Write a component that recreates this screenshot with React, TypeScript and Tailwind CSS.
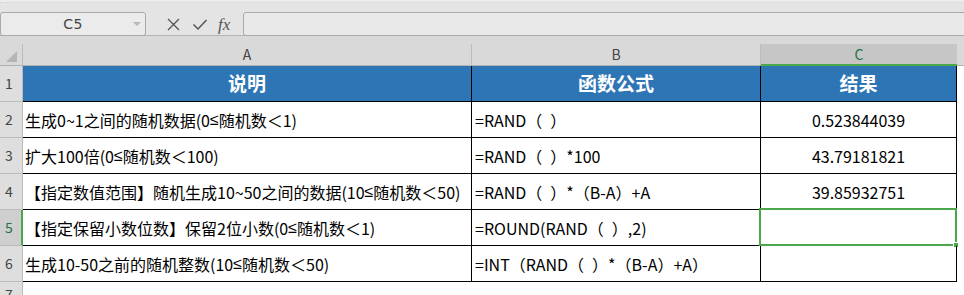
import React from 'react';

const font = { fontFamily: '"Noto Sans CJK SC", "Noto Sans", sans-serif' };

const rows = [
  { a: '生成0~1之间的随机数据(0≤随机数＜1)', b: '=RAND（\u2002）', c: '0.523844039' },
  { a: '扩大100倍(0≤随机数＜100)', b: '=RAND（\u2002）*100', c: '43.79181821' },
  { a: '【指定数值范围】随机生成10~50之间的数据(10≤随机数＜50)', b: '=RAND（\u2002）*（B-A）+A', c: '39.85932751' },
  { a: '【指定保留小数位数】保留2位小数(0≤随机数＜1)', b: '=ROUND(RAND（\u2002）,2)', c: '' },
  { a: '生成10-50之前的随机整数(10≤随机数＜50)', b: '=INT（RAND（\u2002）*（B-A）+A）', c: '' },
];

// the narrow ≤ of the original sheet
function Desc({ text }: { text: string }) {
  const parts = text.split('≤');
  return (
    <>
      {parts.map((p, i) => (
        <React.Fragment key={i}>
          {i > 0 && <span style={{ fontFamily: '"Liberation Sans", sans-serif' }}>≤</span>}
          {p}
        </React.Fragment>
      ))}
    </>
  );
}

function FormulaBar() {
  return (
    <div className="h-[36px] bg-[#e4e4e4] border-b border-[#b3b3b3] relative">
      <div className="h-[3px] bg-[#ececec] border-b border-dotted border-[#d0d0d0]" />
      <div className="absolute left-0 top-[12px] h-[24px] w-[146px] bg-[#ebebeb] border border-[#a9a9a9] rounded-[3px] flex items-center justify-center text-[14px] text-[#444]" style={{ fontFamily: '"DejaVu Sans", sans-serif' }}>
        <span className="tracking-[0.5px]">C5</span>
        <span className="absolute right-[4px] top-[9px] w-0 h-0 border-l-[4px] border-r-[4px] border-t-[4px] border-l-transparent border-r-transparent border-t-[#b8b8b8]" />
      </div>
      <svg className="absolute left-[166px] top-[17px]" width="15" height="15" viewBox="0 0 15 15">
        <path d="M2 2 L13 13 M13 2 L2 13" stroke="#555" strokeWidth="1.3" fill="none" />
      </svg>
      <svg className="absolute left-[192px] top-[17px]" width="16" height="15" viewBox="0 0 16 15">
        <path d="M1.5 7.5 L6 12 L14.5 3" stroke="#555" strokeWidth="1.5" fill="none" />
      </svg>
      <span className="absolute left-[218px] top-[12px] text-[17px] italic text-[#555]" style={{ fontFamily: '"Liberation Serif", serif' }}>fx</span>
      <div className="absolute left-[243px] top-[12px] h-[24px] right-[-4px] bg-[#e9e9e9] border border-[#a9a9a9] rounded-[3px]" />
    </div>
  );
}

export default function App() {
  return (
    <div className="w-[964px] h-[295px] overflow-hidden bg-white" style={font}>
      <FormulaBar />
      <div className="h-[8px] bg-[#d9d9d9]" />
      {/* column headers */}
      <div className="flex h-[22px] bg-[#d9d9d9] border-b border-[#b0b0b0] text-[14px] text-[#444]">
        <div className="w-[23px] border-r border-[#bcbcbc] relative">
          <span className="absolute left-[6px] bottom-[3px] w-0 h-0 border-b-[11px] border-l-[11px] border-l-transparent border-b-[#b5b5b5]" />
        </div>
        <div className="w-[449px] border-r border-[#bcbcbc] flex items-center justify-center">A</div>
        <div className="w-[289px] border-r border-[#bcbcbc] flex items-center justify-center">B</div>
        <div className="w-[196px] bg-[#c6c6c6] border-b-2 border-[#4aa84a] mb-[-1px] flex items-center justify-center text-[#217346]">C</div>
        <div className="flex-1" />
      </div>
      {/* row 1 */}
      <div className="flex h-[36px]">
        <div className="w-[23px] bg-[#dedede] border-r border-b border-[#bcbcbc] text-[14px] text-[#444] flex items-center pl-[5px]">1</div>
        <div className="w-[449px] bg-[#2e75b6] border-r border-b border-black text-white font-bold text-[19px] flex items-center justify-center">说明</div>
        <div className="w-[289px] bg-[#2e75b6] border-r border-b border-black text-white font-bold text-[19px] flex items-center justify-center">函数公式</div>
        <div className="w-[196px] bg-[#2e75b6] border-r border-b border-black text-white font-bold text-[19px] flex items-center justify-center">结果</div>
        <div className="flex-1" />
      </div>
      {rows.map((r, i) => {
        const sel = i === 3;
        return (
          <div key={i} className="flex h-[36px] text-[16px] text-black">
            <div className={sel
              ? 'w-[23px] bg-[#cfcfcf] border-r-2 border-r-[#4aa84a] border-b border-b-[#bcbcbc] text-[14px] text-[#217346] flex items-center pl-[5px]'
              : 'w-[23px] bg-[#dedede] border-r border-b border-[#bcbcbc] text-[14px] text-[#444] flex items-center pl-[5px]'}>{i + 2}</div>
            <div className="w-[449px] border-r border-b border-black flex items-center pl-[2px] whitespace-nowrap"><Desc text={r.a} /></div>
            <div className="w-[289px] border-r border-b border-black flex items-center pl-[3px] whitespace-pre">{r.b}</div>
            <div className="w-[196px] border-r border-b border-black flex items-center justify-center relative">
              {r.c}
              {sel && (
                <>
                  <div className="absolute left-[-2px] top-[-2px] w-[198px] h-[38px] border-2 border-[#4aa84a]" />
                  <div className="absolute left-[192px] top-[32px] w-[6px] h-[6px] bg-[#4aa84a] border border-white" />
                </>
              )}
            </div>
            <div className="flex-1" />
          </div>
        );
      })}
      {/* row 7 */}
      <div className="flex h-[20px]">
        <div className="w-[23px] bg-[#dedede] border-r border-[#bcbcbc] text-[14px] text-[#444] flex items-start pt-[2px] pl-[5px]">7</div>
        <div className="flex-1" />
      </div>
    </div>
  );
}
